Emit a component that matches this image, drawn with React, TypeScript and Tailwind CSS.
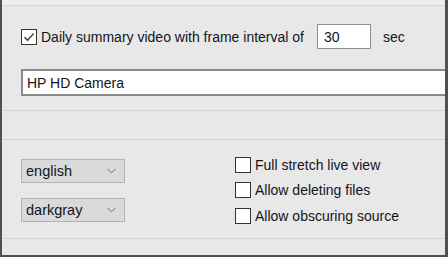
import React from "react";

function Box({ checked }: { checked?: boolean }) {
  return (
    <div className="w-[16px] h-[16px] shrink-0 border border-[#333333] bg-white flex items-center justify-center">
      {checked && (
        <svg width="12" height="12" viewBox="0 0 12 12">
          <path d="M1.5 6.2 L4.6 9.2 L10.6 2.6" fill="none" stroke="#333333" strokeWidth="1.4" />
        </svg>
      )}
    </div>
  );
}

function Select({ label }: { label: string }) {
  return (
    <div className="w-[104px] h-[24px] border border-[#b3b3b3] bg-[#dadada] flex items-center justify-between pl-[4px] pr-[8px]">
      <span className="text-[14.5px] text-[#14141c] leading-none">{label}</span>
      <svg width="9" height="6" viewBox="0 0 9 6">
        <path d="M0.5 0.8 L4.5 4.8 L8.5 0.8" fill="none" stroke="#6a6a6a" strokeWidth="1" />
      </svg>
    </div>
  );
}

function CheckRow({ label }: { label: string }) {
  return (
    <div className="h-[25.5px] flex items-center gap-[4px]">
      <Box />
      <span className="text-[14px] text-[#14141c] leading-none">{label}</span>
    </div>
  );
}

export default function App() {
  return (
    <div
      className="w-[448px] h-[257px] overflow-hidden flex flex-col bg-[#e8e8e8] border-l-2 border-r-[3px] border-b-2 border-[#505050]"
      style={{ fontFamily: '"Liberation Sans", Arial, sans-serif' }}
    >
      <div className="h-[6px] shrink-0 bg-[#eeeeee] border-b border-[#d4d4d4]" />
      <div className="mt-[18px] h-[25px] shrink-0 flex items-center pl-[19px]">
        <div className="w-[296px] flex items-center gap-[4px]">
          <Box checked />
          <span className="text-[14px] text-[#14141c] leading-none">Daily summary video with frame interval of</span>
        </div>
        <div className="w-[54px] h-[25px] border border-[#8e8e8e] bg-white pl-[6px] pt-[5px] text-[14px] text-[#14141c] leading-none">
          30
        </div>
        <span className="ml-[12px] text-[14px] text-[#14141c] leading-none">sec</span>
      </div>
      <div className="mt-[20px] ml-[19px] w-[426px] h-[27px] shrink-0 border-2 border-[#8a8a8a] bg-white flex items-center pl-[4px]">
        <span className="text-[14px] text-[#14141c] leading-none">HP HD Camera</span>
      </div>
      <div className="mt-[14px] h-px shrink-0 bg-[#d2d2d2]" />
      <div className="mt-[28px] h-px shrink-0 bg-[#d2d2d2]" />
      <div className="h-[98px] shrink-0 flex pl-[19px]">
        <div className="pt-[19px] flex flex-col gap-[15px]">
          <Select label="english" />
          <Select label="darkgray" />
        </div>
        <div className="ml-[110px] pt-[12px] flex flex-col">
          <CheckRow label="Full stretch live view" />
          <CheckRow label="Allow deleting files" />
          <CheckRow label="Allow obscuring source" />
        </div>
      </div>
      <div className="h-px shrink-0 bg-[#d2d2d2]" />
    </div>
  );
}
